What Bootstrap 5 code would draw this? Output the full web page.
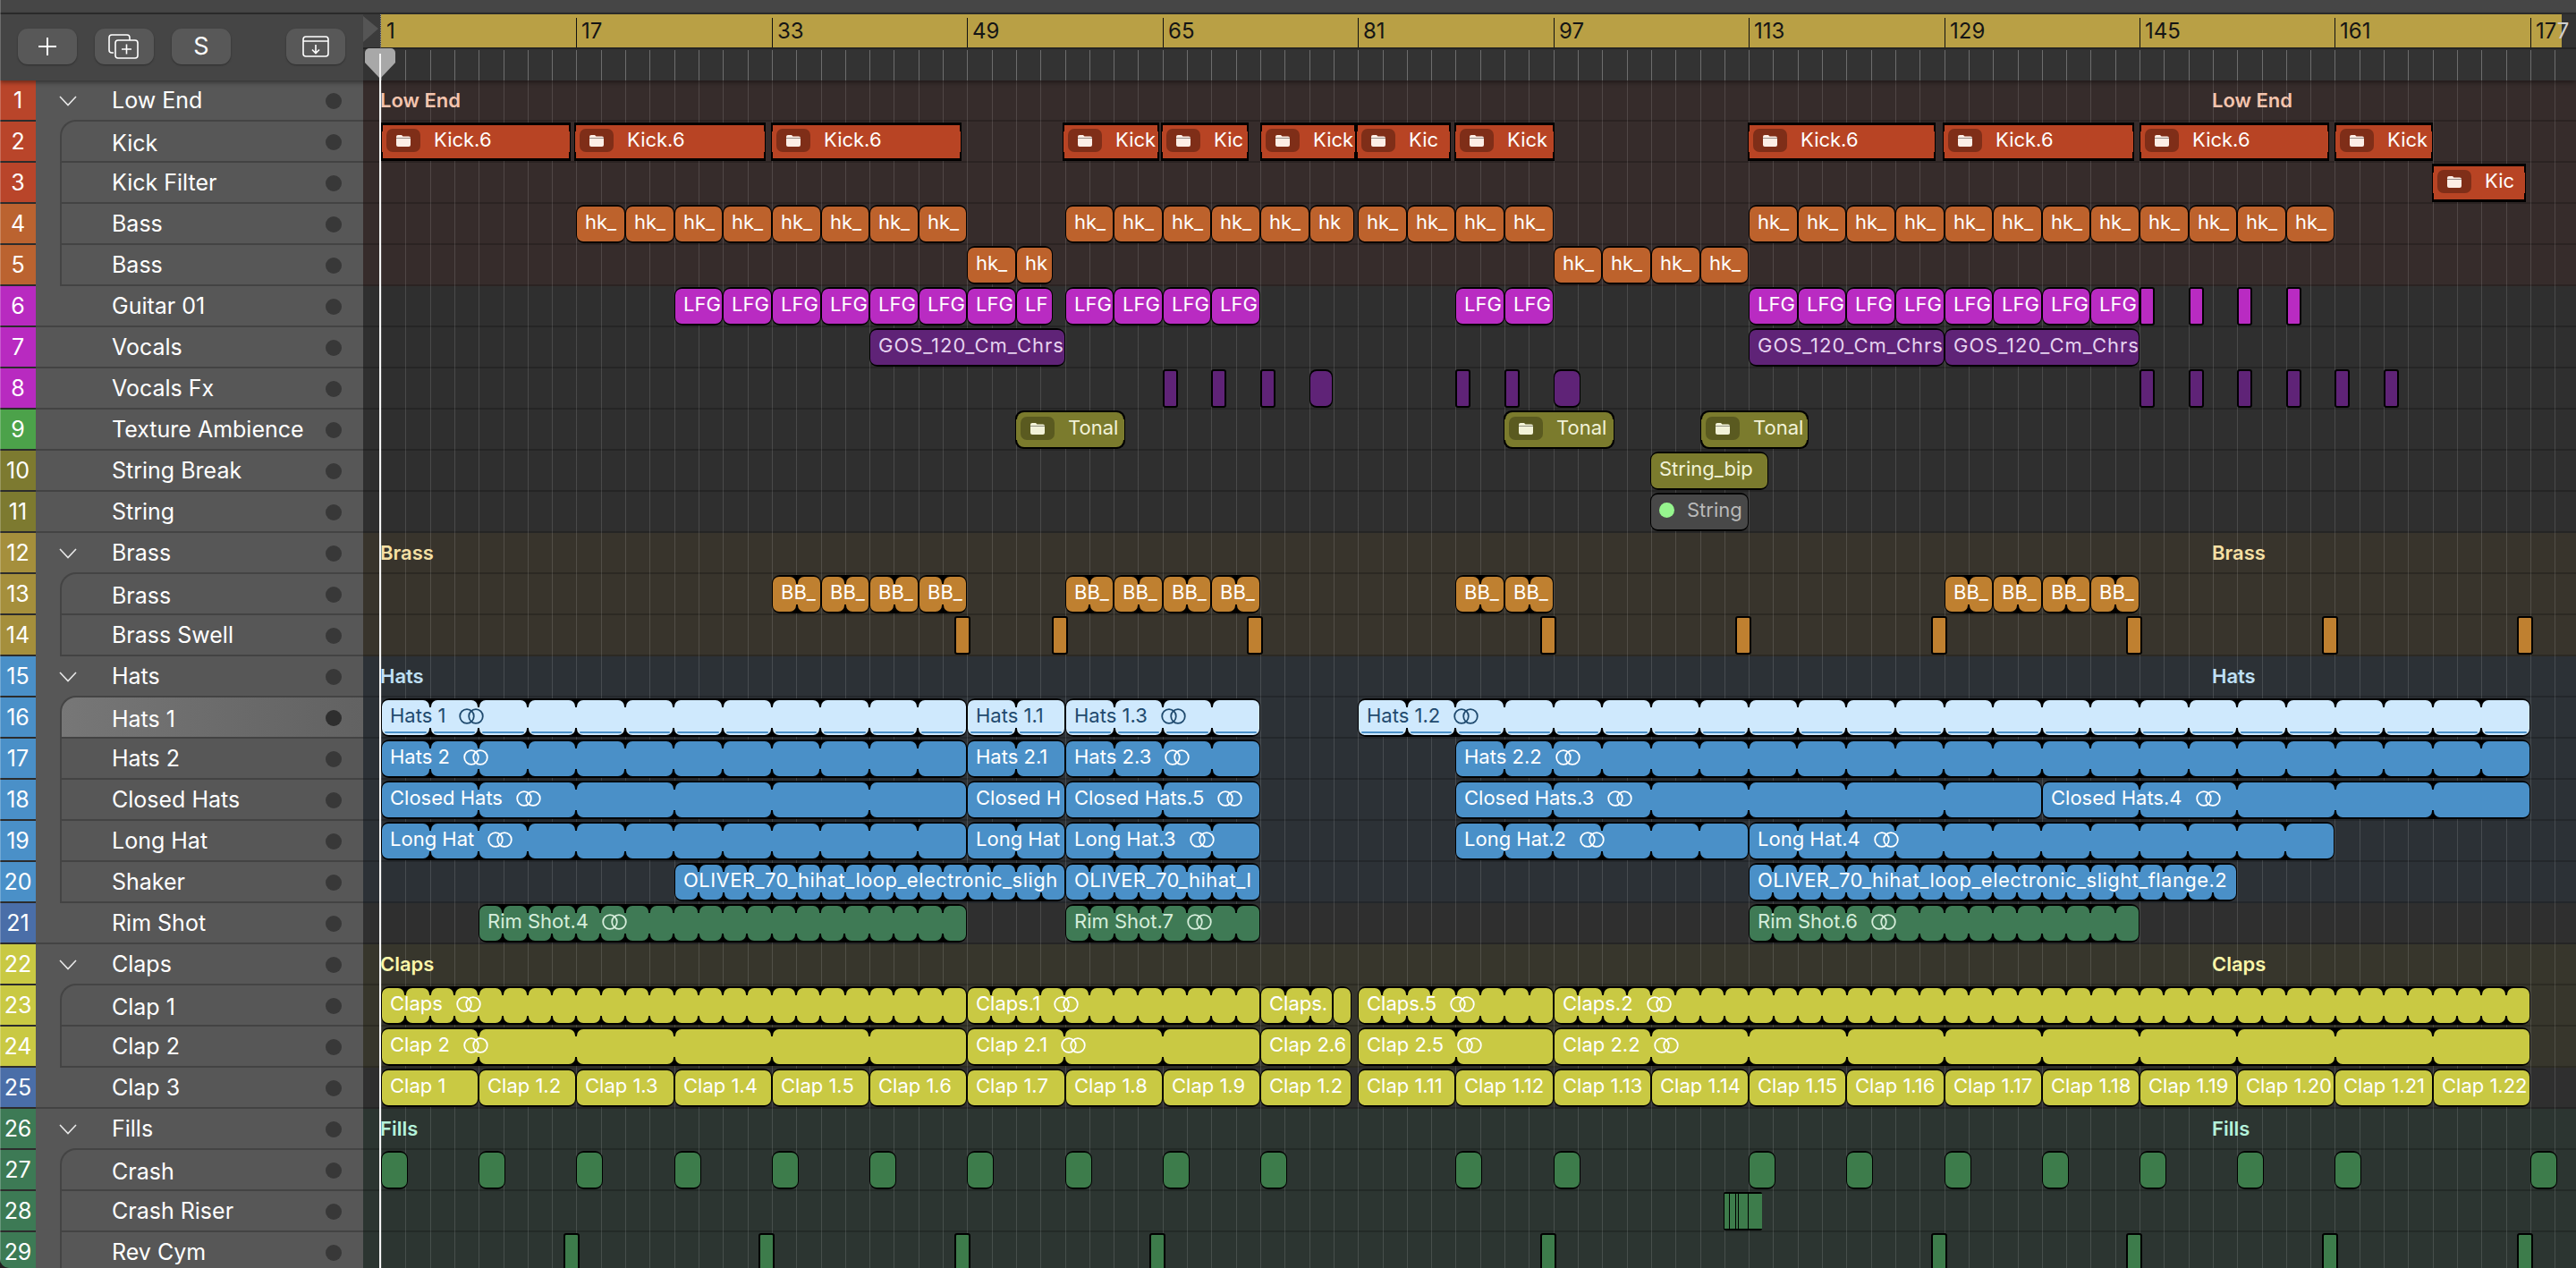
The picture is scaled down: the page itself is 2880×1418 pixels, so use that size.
<!DOCTYPE html>
<html lang="en">
<head>
<meta charset="utf-8">
<title>Arrange</title>
<link href="https://cdn.jsdelivr.net/npm/bootstrap@5.3.0/dist/css/bootstrap.min.css" rel="stylesheet">
<style>
html,body{margin:0;height:100%;background:#1e1e1e;overflow:hidden}
.lp-app{position:relative;width:2880px;height:1418px;overflow:hidden;font-family:Inter,"Liberation Sans",sans-serif;border-bottom-left-radius:10px;background:#2e2e2e}
.lp-app::after{content:"";position:absolute;left:0;top:0;bottom:0;width:1px;background:rgba(255,255,255,.22);z-index:9}
.lp-top{height:14px;background:#464646}
.lp-topline{height:2px;background:#2d2d2d}
.lp-head{height:74px;position:relative;z-index:5;box-shadow:0 2px 5px rgba(0,0,0,.45)}
.lp-tools{width:406px;background:#454545;padding:16px 20px 18px 20px}
.lp-btn{width:66px;height:40px;padding:0;background:#585858;border:0;border-radius:11px;color:#fff;box-shadow:0 1px 2px rgba(0,0,0,.35);font-size:27px;line-height:40px;display:flex;align-items:center;justify-content:center}
.lp-btn svg{fill:none;stroke:#fff;stroke-width:2}
.lp-gap{margin-left:20px}
.lp-ruler{position:relative;flex:1 1 auto;background:#333}
.lp-corner{position:absolute;left:0;top:0;width:20px;height:37px;background:#3b3b3b}
.lp-corner svg{position:absolute;left:0;top:2px}
.lp-dots{position:absolute;left:19px;top:0;height:37px;border-left:1px dotted #999}
.lp-gold{position:absolute;left:20px;top:0;width:2438px;height:37px;background:#b9a045}
.lp-goldline{position:absolute;left:0;right:0;top:37px;height:2px;background:#242424}
.lp-bar{position:absolute;top:4px;height:33px;border-left:1px solid #111;padding-left:5px;font-size:24px;line-height:30px;color:#151515;white-space:nowrap}
.lp-bar-fade{color:#cfcfcf}
.lp-ticks{position:absolute;left:20px;right:0;top:40px;bottom:0;background-image:repeating-linear-gradient(90deg,#6d6d6d 0 1px,transparent 1px 27.306px)}
.lp-row{height:46px}
.lp-num{width:40px;flex:0 0 40px;height:46px;color:#fff;font-size:25px;line-height:44px;text-align:center;border-bottom:2px solid #2c2c2c}
.n-red{background:#b9452a}.n-org{background:#bb6330}.n-mag{background:#b82ac0}.n-grn{background:#4ca24a}.n-olv{background:#7d7a30}.n-gld{background:#a58f3c}.n-blu{background:#4a90c8}.n-ind{background:#4a6ea8}.n-yel{background:#c9c943}.n-fil{background:#3d7a55}
.lp-trk{width:366px;flex:0 0 366px;height:46px;background:#575757;color:#fff}
.lp-cell{position:relative;height:46px;border-bottom:2px solid #434343;font-size:25px;padding-left:85px;line-height:44px;white-space:nowrap}
.lp-cell-nob{border-bottom:0}
.lp-frame{margin-left:27px;padding-left:56px;border-left:2px solid #444}
.lp-frame-first{margin-top:-2px;height:48px;line-height:48px;border-top:2px solid #444;border-top-left-radius:18px}
.lp-sel{background:linear-gradient(90deg,#777,#6a6a6a 60%,#626262)}
.lp-chev{position:absolute;left:26px;top:17px;fill:none;stroke:#e8e8e8;stroke-width:1.6}
.lp-dot{position:absolute;right:24px;top:14px;width:18px;height:18px;border-radius:50%;background:#383838}
.lp-frame-first .lp-dot{top:14px}
.lp-sel .lp-dot{background:#2e2e2e}
.lp-lane{position:relative;flex:1 1 auto;height:46px;border-bottom:2px solid rgba(0,0,0,.2)}
.lp-lane::before{content:"";position:absolute;left:20px;right:0;top:0;bottom:-2px;background-image:repeating-linear-gradient(90deg,rgba(255,255,255,.13) 0 1px,transparent 1px 27.306px)}
.l-low{background-color:#362c2b}.l-plain{background-color:#2f2f2f}.l-brs{background-color:#38342c}.l-hat{background-color:#2c3136}.l-clp{background-color:#37362c}.l-fil{background-color:#2c3531}
.lp-sect{position:absolute;top:0;line-height:44px;font-size:22px;font-weight:600;white-space:nowrap}
.t-low{color:#f3c4ae}.t-brs{color:#f5e0a4}.t-hat{color:#bfe0f7}.t-clp{color:#fbf6a9}.t-fil{color:#b4f2da}
.lp-rgn{position:absolute;top:1px;height:43px;background:#000;border-radius:9px;padding:2px 1px;display:flex;gap:2px;overflow:hidden;color:#fff}
.lp-seg{flex:1 1 0;min-width:0;background:var(--f);border-radius:7px;position:relative}
.lp-mid{position:absolute;left:1px;right:1px;top:10px;bottom:10px;background:var(--f)}
.lp-label{position:absolute;left:10px;right:1px;top:0;bottom:4px;display:flex;align-items:center;gap:15px;font-size:22px;white-space:nowrap;overflow:hidden}
.lp-wide1{letter-spacing:.45px}
.lp-wide2{letter-spacing:1px}
.lp-ring{fill:none;stroke:currentColor;stroke-width:1.8;flex:0 0 auto}
.lp-fold{border-radius:0;padding:3px 2px}
.lp-fold .lp-seg{border-radius:0}
.lp-fold-round{border-radius:9px;padding:2px}
.lp-fold-round .lp-seg{border-radius:8px}
.lp-fold .lp-label{left:59px}
.lp-ficon{position:absolute;left:6px;top:7px;width:38px;height:26px;border-radius:7px;display:flex;align-items:center;justify-content:center;background:var(--d)}
.lp-thin{border-radius:3px;padding:2px}
.lp-thin .lp-seg{border-radius:1px}
.lp-thin .lp-mid{display:none}
.lp-round{border-radius:8px}
.lp-riser{border-radius:2px;padding:2px 1px;gap:1px}
.lp-riser .lp-seg{border-radius:0;flex:none}
.lp-riser .lp-mid{display:none}
.f-kick{--f:#b84424;--d:#7f2e18}.f-hk{--f:#bd622c}.f-lfg{--f:#b92bc2}.f-gos{--f:#5f2377;color:#e6d2ef}.f-ton{--f:#7b7b2d;--d:#5a5a20;color:#f2f2d8}
.f-str{--f:#484848;color:#b9b9b9}.f-bb{--f:#bf8030}.f-hat{--f:#4a90c8}.f-rim{--f:#3f7a55;color:#d6eddb}.f-clp{--f:#c9c943}.f-crs{--f:#3d7c4b}
.f-sel{--f:#cfe9fd;color:#1f4a6e}
.f-sel .lp-seg::after{content:"";position:absolute;left:3px;right:3px;bottom:2px;height:2px;background:#4a90c8;border-radius:1px}
.lp-grn{width:17px;height:17px;border-radius:50%;background:#96f58e;flex:0 0 auto;margin-right:-1px}
.lp-play{position:absolute;left:424px;top:60px;bottom:0;width:2px;background:#f4f4f4;z-index:7}
.lp-phead{position:absolute;left:408px;top:54px;z-index:6;fill:#a8a8a8}
</style>
</head>
<body>
<div class="lp-app d-flex flex-column" id="app">
  <div class="lp-top flex-shrink-0"></div>
  <div class="lp-topline flex-shrink-0"></div>
  <div class="lp-head d-flex flex-shrink-0">
    <div class="lp-tools d-flex flex-shrink-0">
      <button class="btn lp-btn" type="button" aria-label="Add track"><svg width="22" height="22" viewBox="0 0 22 22"><path d="M11 1v20M1 11h20"/></svg></button>
      <button class="btn lp-btn lp-gap" type="button" aria-label="Duplicate track"><svg width="36" height="28" viewBox="0 0 36 28" style="stroke-width:1.6"><path d="M6 21H4a3 3 0 0 1-3-3V4a3 3 0 0 1 3-3h17a3 3 0 0 1 3 3v3"/><rect x="8" y="7" width="25" height="20" rx="3"/><path d="M20.5 11.5v11M15 17h11"/></svg></button>
      <button class="btn lp-btn lp-gap" type="button">S</button>
      <button class="btn lp-btn ms-auto" type="button" aria-label="Import"><svg width="30" height="24" viewBox="0 0 30 24" style="stroke-width:1.6"><rect x="1" y="1" width="28" height="22" rx="3"/><path d="M1 6h28M15 10v9M11 15.500l4 4 4-4"/></svg></button>
    </div>
    <div class="lp-ruler" id="ruler">
      <div class="lp-corner"><svg width="18" height="30" viewBox="0 0 18 30"><path d="M0 0l17 14L0 29z" fill="#555"/></svg></div>
      <div class="lp-dots"></div>
      <div class="lp-gold"></div>
      <div class="lp-goldline"></div>
      <div class="lp-ticks"></div>
    </div>
  </div>
  <div id="rows" class="flex-shrink-0"></div>
  <svg class="lp-phead" width="34" height="34" viewBox="0 0 34 34"><path d="M5 0h24a5 5 0 0 1 5 5v11L17 34 0 16V5a5 5 0 0 1 5-5z"/></svg>
  <div class="lp-play"></div>
</div>
<script>
const X=b=>426+(b-1)*13.653, L=x=>x-406;
const ruler=document.getElementById('ruler');
[1,17,33,49,65,81,97,113,129,145,161,177].forEach(b=>{
  const d=document.createElement('div');d.className='lp-bar';d.style.left=L(Math.round(X(b)))+'px';
  d.innerHTML=b===177?'17<span class="lp-bar-fade">7</span>':String(b);
  if(b===1){d.style.borderLeft='0';d.style.paddingLeft='6px';}
  ruler.appendChild(d);
});
const T=[
['Low End','red','low','h'],['Kick','red','low','f1'],['Kick Filter','red','low','f'],['Bass','org','low','f'],['Bass','org','low','fl'],
['Guitar 01','mag','plain',''],['Vocals','mag','plain',''],['Vocals Fx','mag','plain',''],['Texture Ambience','grn','plain',''],['String Break','olv','plain',''],['String','olv','plain',''],
['Brass','gld','brs','h'],['Brass','gld','brs','f1'],['Brass Swell','gld','brs','fl'],
['Hats','blu','hat','h'],['Hats 1','blu','hat','f1s'],['Hats 2','blu','hat','f'],['Closed Hats','blu','hat','f'],['Long Hat','blu','hat','f'],['Shaker','blu','hat','fl'],
['Rim Shot','ind','plain',''],
['Claps','yel','clp','h'],['Clap 1','yel','clp','f1'],['Clap 2','yel','clp','fl'],['Clap 3','ind','plain',''],
['Fills','fil','fil','h'],['Crash','fil','fil','f1'],['Crash Riser','fil','fil','f'],['Rev Cym','fil','fil','f']];
const rows=document.getElementById('rows'),lanes=[];
T.forEach((t,i)=>{
  const r=document.createElement('div');r.className='lp-row d-flex';
  const fl=t[3];
  let cls='lp-cell';
  if(fl.includes('h'))cls+=' lp-cell-nob';
  if(fl.includes('f'))cls+=' lp-frame';
  if(fl.includes('1'))cls+=' lp-frame-first';
  if(fl.includes('s'))cls+=' lp-sel';
  const chev=fl.includes('h')?'<svg class="lp-chev" width="20" height="12" viewBox="0 0 20 12"><path d="M1 1l9 9.500L19 1"/></svg>':'';
  r.innerHTML='<div class="lp-num n-'+t[1]+'">'+(i+1)+'</div><div class="lp-trk"><div class="'+cls+'">'+chev+t[0]+'<span class="lp-dot"></span></div></div><div class="lp-lane l-'+t[2]+'"></div>';
  rows.appendChild(r);lanes.push(r.querySelector('.lp-lane'));
});
[[1,'Low End','low'],[12,'Brass','brs'],[15,'Hats','hat'],[22,'Claps','clp'],[26,'Fills','fil']].forEach(s=>{
  [19,2067].forEach(x=>{const d=document.createElement('div');d.className='lp-sect t-'+s[2];d.style.left=x+'px';d.textContent=s[1];lanes[s[0]-1].appendChild(d);});
});
const RING='<svg class="lp-ring" width="28" height="18" viewBox="0 0 28 18"><circle cx="9" cy="9" r="7.800"/><circle cx="19" cy="9" r="7.800"/></svg>';
const FOLD=c=>'<span class="lp-ficon"><svg width="18" height="15" viewBox="0 0 18 15"><path d="M1 3a2 2 0 0 1 2-2h4l1.500 1.500H15a2 2 0 0 1 2 2V12a2 2 0 0 1-2 2H3a2 2 0 0 1-2-2z" fill="'+c+'"/><path d="M1 4.500h16" stroke="#00000066" stroke-width="1"/></svg></span>';
function px(row,x0,x1,label,f,o={}){
  const d=document.createElement('div');
  d.className='lp-rgn f-'+f+(o.cls?' '+o.cls:'');
  d.style.left=L(x0)+'px';d.style.width=(x1-x0)+'px';
  let h='<div class="lp-mid"></div>';
  const w=o.parts||[1];
  w.forEach(g=>{h+='<div class="lp-seg" style="flex-grow:'+g+'"></div>';});
  if(o.fold)h+=FOLD(o.fold);
  if(label!==''||o.grn)h+='<div class="lp-label'+(o.wide?' lp-wide'+o.wide:'')+'">'+(o.grn?'<span class="lp-grn"></span>':'')+'<span>'+label+'</span>'+(o.ring?RING:'')+'</div>';
  d.innerHTML=h;lanes[row-1].appendChild(d);
}
function R(row,s,e,label,f,loop,ring,wide){
  const parts=[];
  if(loop){let a=s;while(a<e-0.01){parts.push(Math.min(loop,e-a));a+=loop;}}else parts.push(1);
  px(row,Math.round(X(s)),Math.round(X(e)),label,f,{parts,ring,wide});
}
const step=(row,a,b,st,label,f,loop)=>{for(let s=a;s<b;s+=st)R(row,s,s+st,label,f,loop);};
// folder regions
[[426,638],[642,856],[862,1075],[1188,1296],[1298,1396],[1409,1516],[1516,1622],[1626,1738],[1954,2164],[2172,2386],[2392,2604],[2610,2720]].forEach((p,i)=>{
  px(2,p[0],p[1],[0,1,2,8,9,10].includes(i)?'Kick.6':(i===4||i===6?'Kic':'Kick'),'kick',{cls:'lp-fold',fold:'#fdeee6'});
});
px(3,2719,2824,'Kic','kick',{cls:'lp-fold',fold:'#fdeee6'});
// bass
step(4,17,49,4,'hk_','hk');step(4,57,77,4,'hk_','hk');R(4,77,80.7,'hk','hk');step(4,81,97,4,'hk_','hk');step(4,113,161,4,'hk_','hk');
R(5,49,53,'hk_','hk');R(5,53,56,'hk','hk');step(5,97,113,4,'hk_','hk');
// guitar
step(6,25,53,4,'LFG','lfg');R(6,53,56,'LF','lfg');step(6,57,73,4,'LFG','lfg');step(6,89,97,4,'LFG','lfg');step(6,113,145,4,'LFG','lfg');
[145,149,153,157].forEach(b=>{const x=Math.round(X(b));px(6,x,x+17,'','lfg',{cls:'lp-thin'});});
// vocals
R(7,41,57,'GOS_120_Cm_Chrs','gos',0,0,2);R(7,113,129,'GOS_120_Cm_Chrs','gos',0,0,2);R(7,129,145,'GOS_120_Cm_Chrs','gos',0,0,2);
[[65,17],[69,17],[73,17],[77,26],[89,17],[93,17],[97,30],[145,17],[149,17],[153,17],[157,17],[161,17],[165,17]].forEach(p=>{const x=Math.round(X(p[0]));px(8,x,x+p[1],'','gos',{cls:p[1]>17?'lp-round':'lp-thin'});});
// texture / strings
[[1135,1258],[1681,1805],[1901,2022]].forEach(p=>px(9,p[0],p[1],'Tonal','ton',{cls:'lp-fold lp-fold-round',fold:'#f2f2d8'}));
px(10,1845,1977,'String_bip','ton');
px(11,1845,1955,'String','str',{grn:1});
// brass
step(13,33,49,4,'BB_','bb',2);step(13,57,73,4,'BB_','bb',2);step(13,89,97,4,'BB_','bb',2);step(13,129,145,4,'BB_','bb',2);
[48,56,72,96,112,128,144,160,176].forEach(b=>{const x=Math.round(X(b))-1;px(14,x,x+18,'','bb',{cls:'lp-thin'});});
[16,32,48,64,96,128,144,160,176].forEach(b=>{const x=Math.round(X(b))-1;px(29,x,x+18,'','crs',{cls:'lp-thin'});});
// hats
R(16,1,49,'Hats 1','hat f-sel',4,1);R(16,49,57,'Hats 1.1','hat f-sel',4);R(16,57,73,'Hats 1.3','hat f-sel',4,1);R(16,81,177,'Hats 1.2','hat f-sel',4,1);
R(17,1,49,'Hats 2','hat',4,1);R(17,49,57,'Hats 2.1','hat',4);R(17,57,73,'Hats 2.3','hat',4,1);R(17,89,177,'Hats 2.2','hat',4,1);
R(18,1,49,'Closed Hats','hat',8,1);R(18,49,57,'Closed H','hat');R(18,57,73,'Closed Hats.5','hat',8,1);R(18,89,137,'Closed Hats.3','hat',8,1);R(18,137,177,'Closed Hats.4','hat',8,1);
R(19,1,49,'Long Hat','hat',4,1);R(19,49,57,'Long Hat','hat',4);R(19,57,73,'Long Hat.3','hat',4,1);R(19,89,113,'Long Hat.2','hat',4,1);R(19,113,161,'Long Hat.4','hat',4,1);
R(20,25,57,'OLIVER_70_hihat_loop_electronic_sligh','hat',2,0,1);R(20,57,73,'OLIVER_70_hihat_l','hat',2,0,1);R(20,113,153,'OLIVER_70_hihat_loop_electronic_slight_flange.2','hat',2,0,1);
R(21,9,49,'Rim Shot.4','rim',2,1);R(21,57,73,'Rim Shot.7','rim',2,1);R(21,113,145,'Rim Shot.6','rim',2,1);
// claps
R(23,1,49,'Claps','clp',2,1);R(23,49,73,'Claps.1','clp',2,1);px(23,1409,1490,'Claps.','clp',{parts:[2,2,1.800]});px(23,1490,1511,'','clp');R(23,81,97,'Claps.5','clp',2,1);R(23,97,177,'Claps.2','clp',2,1);
R(24,1,49,'Clap 2','clp',8,1);R(24,49,73,'Clap 2.1','clp',8,1);px(24,1409,1511,'Clap 2.6','clp');R(24,81,97,'Clap 2.5','clp',8,1);R(24,97,177,'Clap 2.2','clp',8,1);
[[1,'Clap 1'],[9,'Clap 1.2'],[17,'Clap 1.3'],[25,'Clap 1.4'],[33,'Clap 1.5'],[41,'Clap 1.6'],[49,'Clap 1.7'],[57,'Clap 1.8'],[65,'Clap 1.9'],[81,'Clap 1.11'],[89,'Clap 1.12'],[97,'Clap 1.13'],[105,'Clap 1.14'],[113,'Clap 1.15'],[121,'Clap 1.16'],[129,'Clap 1.17'],[137,'Clap 1.18'],[145,'Clap 1.19'],[153,'Clap 1.20'],[161,'Clap 1.21'],[169,'Clap 1.22']].forEach(c=>R(25,c[0],c[0]+8,c[1],'clp'));
px(25,1409,1511,'Clap 1.2','clp');
// fills
[1,9,17,25,33,41,49,57,65,73,89,97,113,121,129,137,145,153,161,177].forEach(b=>{const x=Math.round(X(b));px(27,x,x+30,'','crs');});
px(28,1927,1970,'','crs',{cls:'lp-riser',parts:[1]});
(function(){const l=lanes[27].lastChild;l.querySelectorAll('.lp-seg').forEach(s=>s.remove());[5,6,2,10,16].forEach(w=>{const s=document.createElement('div');s.className='lp-seg';s.style.width=w+'px';l.appendChild(s);});})();
</script>
<script src="https://cdn.jsdelivr.net/npm/bootstrap@5.3.0/dist/js/bootstrap.bundle.min.js"></script>
</body>
</html>
